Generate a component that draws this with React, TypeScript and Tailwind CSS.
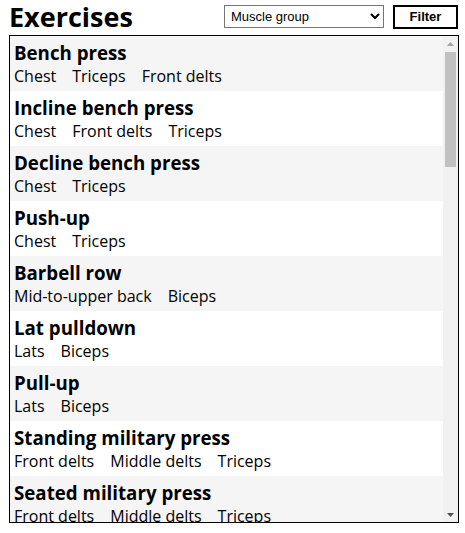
import React from 'react';

interface Exercise {
  name: string;
  muscles: string[];
}

const exercises: Exercise[] = [
  { name: 'Bench press', muscles: ['Chest', 'Triceps', 'Front delts'] },
  { name: 'Incline bench press', muscles: ['Chest', 'Front delts', 'Triceps'] },
  { name: 'Decline bench press', muscles: ['Chest', 'Triceps'] },
  { name: 'Push-up', muscles: ['Chest', 'Triceps'] },
  { name: 'Barbell row', muscles: ['Mid-to-upper back', 'Biceps'] },
  { name: 'Lat pulldown', muscles: ['Lats', 'Biceps'] },
  { name: 'Pull-up', muscles: ['Lats', 'Biceps'] },
  { name: 'Standing military press', muscles: ['Front delts', 'Middle delts', 'Triceps'] },
  { name: 'Seated military press', muscles: ['Front delts', 'Middle delts', 'Triceps'] },
];

const App: React.FC = () => {
  return (
    <div className="w-[465px] h-[533px] bg-white text-black font-['Open_Sans',sans-serif]">
      <div className="flex items-center justify-between h-[35px] pl-[9px] pr-[7px]">
        <h1 className="text-[27px] font-bold leading-[35px] -mt-[2px]">Exercises</h1>
        <div className="flex items-center gap-[9px] -mt-[2px]">
          <select className="w-[160px] h-[23px] border border-[#767676] bg-white text-[13px] font-['Liberation_Sans',Arial,sans-serif] px-[2px] rounded-none">
            <option>Muscle group</option>
          </select>
          <button className="w-[65px] h-[24px] border-2 border-black bg-white text-[13px] font-bold font-['Liberation_Sans',Arial,sans-serif]">
            Filter
          </button>
        </div>
      </div>
      <div className="ml-[9px] w-[450px] h-[488px] border border-black flex overflow-hidden">
        <div className="flex-1 overflow-hidden">
          {exercises.map((ex, idx) => (
            <div
              key={idx}
              className={`h-[55px] px-1 pt-[4px] ${idx % 2 === 0 ? 'bg-[#f5f5f5]' : 'bg-white'}`}
            >
              <div className="text-[18.72px] font-bold leading-[25px] whitespace-nowrap">{ex.name}</div>
              <div className="flex gap-4 text-[16px] leading-[22px] whitespace-nowrap">
                {ex.muscles.map((m) => (
                  <span key={m}>{m}</span>
                ))}
              </div>
            </div>
          ))}
        </div>
        <div className="w-[15px] bg-[#f1f1f1] flex flex-col">
          <div className="h-[15px] flex items-center justify-center">
            <svg width="7" height="4" viewBox="0 0 7 4">
              <polygon points="3.5,0 7,4 0,4" fill="#a3a3a3" />
            </svg>
          </div>
          <div className="flex-1 px-[2px] pt-[1px]">
            <div className="h-[115px] bg-[#c1c1c1]" />
          </div>
          <div className="h-[15px] flex items-center justify-center">
            <svg width="7" height="4" viewBox="0 0 7 4">
              <polygon points="0,0 7,0 3.5,4" fill="#505050" />
            </svg>
          </div>
        </div>
      </div>
    </div>
  );
};

export default App;
